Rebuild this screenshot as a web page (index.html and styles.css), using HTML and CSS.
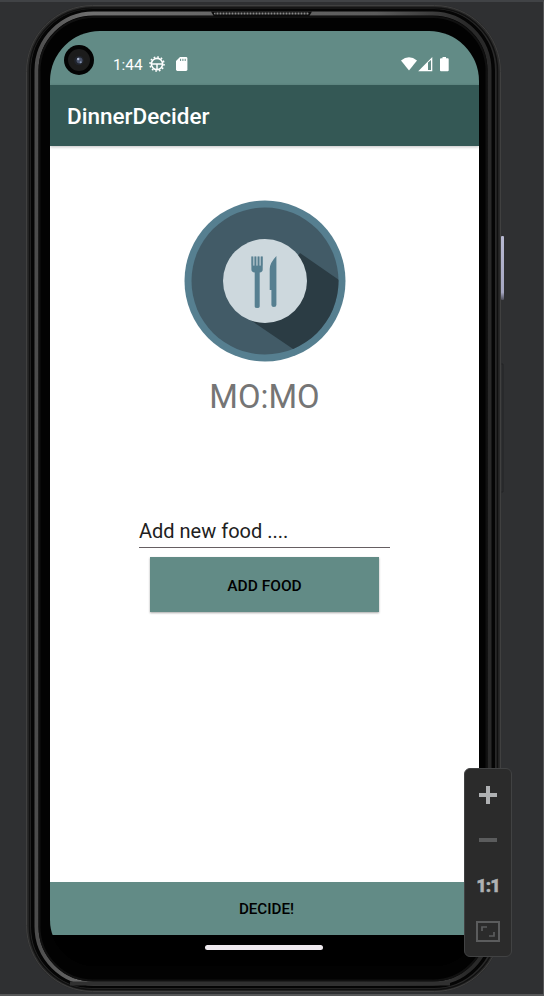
FILE: index.html
```html
<!DOCTYPE html>
<html lang="en">
<head>
<meta charset="utf-8">
<title>DinnerDecider</title>
<link rel="stylesheet" href="styles.css">
</head>
<body>
<main class="emulator">
  <svg class="frame" width="544" height="996" viewBox="0 0 544 996" fill="none" aria-hidden="true">
    <defs>
      <linearGradient id="rim" x1="0" y1="0" x2="1" y2="0">
        <stop offset="0" stop-color="#4c4c4c"/><stop offset=".12" stop-color="#707070"/><stop offset=".75" stop-color="#5c5c5c"/><stop offset=".95" stop-color="#292929"/><stop offset="1" stop-color="#292929"/>
      </linearGradient>
      <linearGradient id="key" x1="0" y1="0" x2="0" y2="1">
        <stop offset="0" stop-color="#b8b9d2"/><stop offset=".88" stop-color="#a6a7c2"/><stop offset="1" stop-color="#4c4c59"/>
      </linearGradient>
      <pattern id="mesh" width="3" height="3" patternUnits="userSpaceOnUse"><path d="M0 0h3v3H0z" fill="#222"/><circle cx="1.5" cy="1.5" r="1" fill="#888"/></pattern>
    </defs>
    <rect x="26" y="5" width="475" height="987" rx="66" fill="#292929"/>
    <rect x="26.5" y="5.5" width="474" height="986" rx="66" stroke="#404040"/>
    <rect x="29.5" y="8" width="468" height="981.500" rx="63" stroke="#101010" stroke-width="1.500"/>
    <rect x="32.500" y="10.500" width="461" height="976" rx="60" fill="#050505" stroke="#050505" stroke-width="3"/>
    <rect x="36.500" y="13.500" width="453" height="970" rx="57" fill="#020202" stroke="url(#rim)" stroke-width="4"/>
    <path d="M70 983.500H450" stroke="#303030" stroke-width="4"/>
    <rect x="39.500" y="17" width="447" height="963.500" rx="54" stroke="#101010" stroke-width="2"/>
    <path d="M211 11.500h101l-3 5h-95z" fill="#0b0b0b"/>
    <rect x="214" y="12" width="95" height="3" rx="1.500" fill="url(#mesh)"/>
    <rect x="501" y="236" width="3" height="64" rx="1" fill="url(#key)"/>
    <path d="M501.500 364h1.500v128h-1.500" stroke="#222325"/>
  </svg>

  <section class="screen">
    <header class="status">
      <svg class="camera" width="30" height="30" viewBox="0 0 30 30" aria-hidden="true">
        <circle cx="15" cy="15" r="15" fill="#030303"/><circle cx="15" cy="15" r="11" fill="#1c1c1c"/><circle cx="15" cy="15.500" r="4.800" fill="#20242c"/><circle cx="15.500" cy="15.500" r="3" fill="#485168"/><circle cx="14.200" cy="14" r="1.200" fill="#a9b5ce"/><circle cx="16.700" cy="17.200" r="1" fill="#8795b4"/>
      </svg>
      <span class="clock">1:44</span>
      <svg class="gear" width="16" height="16" viewBox="0 0 16 16" fill="none" stroke="#fff" aria-hidden="true">
        <circle cx="8" cy="8" r="5.600" stroke-width="1.600"/><circle cx="8" cy="8" r="7" stroke-width="1.600" stroke-dasharray="1.700 1.965"/><path d="M2.500 8h11M8 8v5.500" stroke-width="1.500"/>
      </svg>
      <svg class="card" width="12" height="14" viewBox="0 0 12 14" aria-hidden="true"><path d="M4 0H10q1.400 0 1.400 1.400v11.200Q11.400 14 10 14H1.400Q0 14 0 12.600V4z" fill="#fff"/><path d="M4.600 1.800v2.200M6.900 1.800v2.200M9.200 1.800v2.200" stroke="#628b86" stroke-width="1"/></svg>
      <svg class="signals" width="49" height="15" viewBox="0 0 49 15" aria-hidden="true">
        <path d="M0 3.500Q8-3 16 3.500L8 13.500z" fill="#fff"/>
        <path d="M31.300 0v14.200H17.200zM27 5.500v7.500h3V3z" fill="#fff" fill-rule="evenodd"/>
        <path d="M41.500 0h3.500v1.300h1.700q1 0 1 1v10.900q0 1-1 1H40q-1 0-1-1V2.300q0-1 1-1h1.500z" fill="#fff"/>
      </svg>
    </header>
    <h1 class="appbar">DinnerDecider</h1>
    <div class="content">
      <svg class="logo" width="162" height="162" viewBox="0 0 162 162" aria-hidden="true">
        <defs><clipPath id="plate"><circle cx="81" cy="81" r="73.500"/></clipPath></defs>
        <circle cx="81" cy="81" r="80.500" fill="#567f90"/>
        <circle cx="81" cy="81" r="73.500" fill="#425b67"/>
        <path d="M116 53L174 93L140 170L65 119z" fill="#2b3c44" clip-path="url(#plate)"/>
        <circle cx="81" cy="81" r="42" fill="#cdd8dd"/>
        <g fill="#567f90">
          <path d="M67.400 56.500h1.500v9h1.700v-9h1.500v9h1.700v-9h1.500v9h1.700v-9h1.700v13q0 2.500-3 3v34q0 1.500-2.500 1.500t-2.500-1.500v-34q-3.300-.5-3.300-3z"/>
          <path d="M67.400 56.500h11.300v9H67.400z" opacity=".35"/>
          <path d="M92.400 56v49q0 2-2.500 2t-2.500-2V90h-1.700V69q0-6 6.700-13z"/>
        </g>
      </svg>
      <p class="result">MO:MO</p>
      <div class="field">Add new food ....</div>
      <button class="add">ADD FOOD</button>
    </div>
    <button class="decide">DECIDE!</button>
    <footer class="nav"><span class="handle"></span></footer>
  </section>

  <aside class="zoom">
    <svg width="18" height="18" viewBox="0 0 18 18" aria-hidden="true"><path d="M9 0v18M0 9h18" stroke="#afb1b3" stroke-width="4"/></svg>
    <svg width="18" height="4" viewBox="0 0 18 4" aria-hidden="true"><path d="M0 2h18" stroke="#5b5c5d" stroke-width="4"/></svg>
    <span class="ratio">1:1</span>
    <svg width="24" height="21" viewBox="0 0 24 21" fill="none" stroke="#5b5c5d" aria-hidden="true"><path d="M1 1h22v19H1z" stroke-width="2"/><path d="M6 10V6h5M18 11v4h-5" stroke-width="1.700"/></svg>
  </aside>
</main>
</body>
</html>
```
FILE: styles.css
```css
* { box-sizing: border-box; }
body { margin: 0; background: #fff; font-family: Roboto, sans-serif; }
.emulator {
  position: relative;
  width: 544px;
  height: 996px;
  padding: 29px 0 0 50px;
  overflow: hidden;
  background: #2f3032;
  border-right: 1px solid #555657;
  border-top: 2px solid #414346;
  border-bottom: 2px solid #555657;
}
.frame { position: absolute; left: 0; top: -2px; }
.screen {
  position: relative;
  display: flex;
  flex-direction: column;
  width: 429px;
  height: 935px;
  overflow: hidden;
  border-radius: 50px 50px 46px 46px;
  background: #000;
}
.status {
  display: flex;
  align-items: flex-start;
  flex: 0 0 54px;
  padding: 14px 29px 0 14px;
  background: #628b86;
  color: #fff;
}
.clock { width: 30px; margin: 11px 0 0 19px; font-size: 15.3px; line-height: 18px; }
.gear { margin: 11px 0 0 6px; }
.card { margin: 12px 0 0 11px; }
.signals { margin: 12px 0 0 auto; }
.appbar {
  position: relative;
  flex: 0 0 61px;
  height: 61px;
  margin: 0;
  padding: 1px 0 0 17px;
  background: #345855;
  color: #fff;
  font-size: 22.5px;
  font-weight: 500;
  line-height: 61px;
  box-shadow: 0 1px 3px rgba(0, 0, 0, .25);
}
.content { display: flex; flex: 1; flex-direction: column; align-items: center; padding-top: 54px; background: #fff; }
.logo { flex: none; }
.result { margin: 15px 0 0; color: #757575; font-size: 32.8px; line-height: 40px; }
.field {
  width: 251px;
  height: 34px;
  margin-top: 97px;
  border-bottom: 1px solid #665f62;
  color: #212121;
  font-size: 20px;
  line-height: 35px;
}
button { padding: 0; border: 0; background: #628b86; color: #000; font-family: inherit; font-size: 15.5px; font-weight: 500; }
.add { width: 229px; height: 55px; margin-top: 9px; padding-top: 2px; box-shadow: 0 1px 2px rgba(0, 0, 0, .35); }
.decide { flex: 0 0 53px; padding: 1px 0 0 4px; font-size: 15.2px; }
.nav { display: flex; flex: 0 0 31px; justify-content: center; padding: 10px 1px 0 0; background: #000; }
.handle { width: 118px; height: 5px; border-radius: 3px; background: #eee9ee; }
.zoom {
  position: absolute;
  left: 464px;
  top: 766px;
  display: flex;
  flex-direction: column;
  align-items: center;
  width: 48px;
  height: 189px;
  padding-top: 17px;
  border: 1px solid #414243;
  border-radius: 6px;
  background: #2b2b2b;
}
.zoom svg + svg { margin-top: 34px; }
.ratio { margin-top: 34px; height: 20px; color: #afb1b3; font: 900 18px/20px Roboto, sans-serif; letter-spacing: -1px; -webkit-text-stroke: .4px #afb1b3; }
.zoom .ratio + svg { margin-top: 25px; }
```
